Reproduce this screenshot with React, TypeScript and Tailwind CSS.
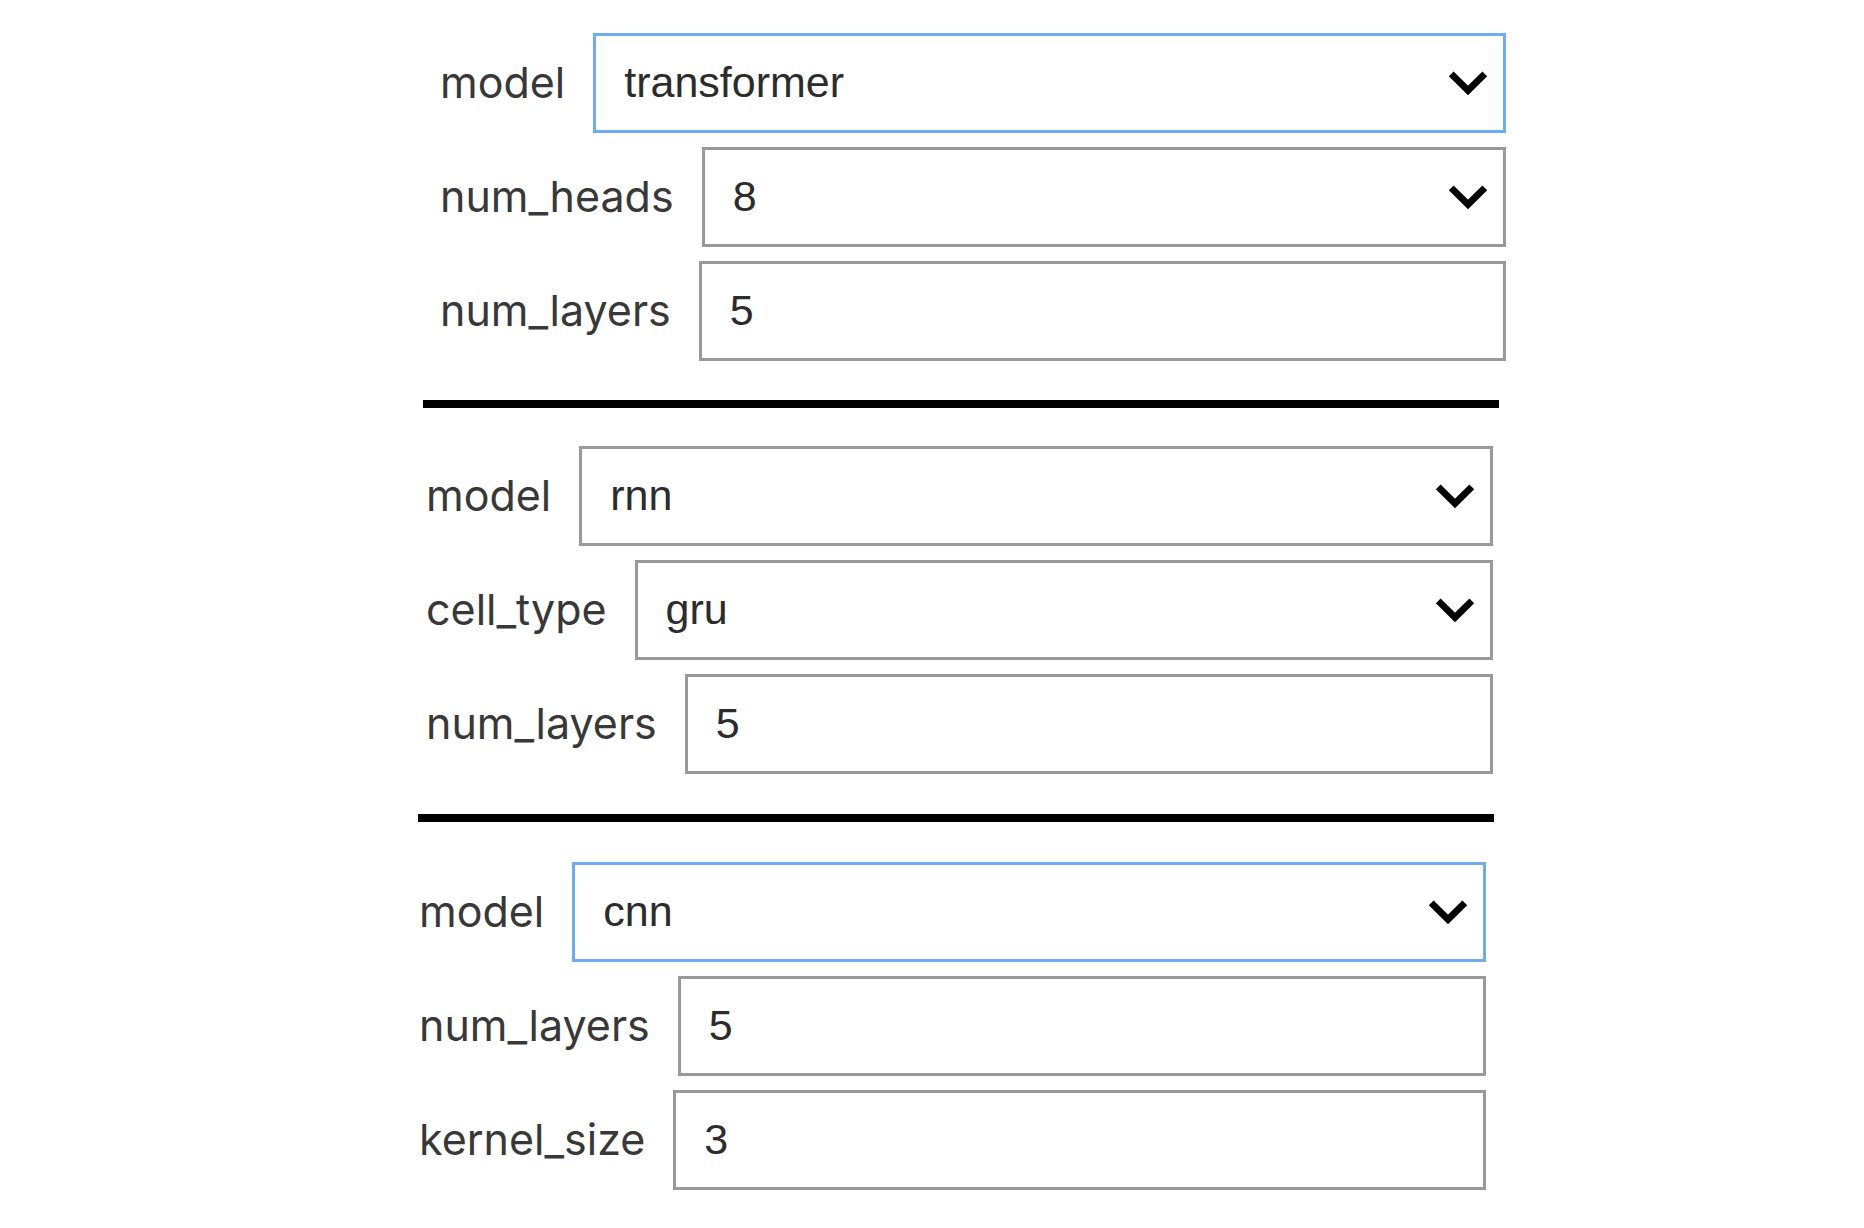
import { useId } from 'react';

type FieldProps = {
  label: string;
  value: string;
  options?: string[];
  active?: boolean;
};

const controlBase =
  'block h-[100px] w-full appearance-none rounded-none border-3 bg-white px-7 pb-0.5 text-[43px] text-[#2c2c2c] outline-none';

function Field({ label, value, options, active = false }: FieldProps) {
  const id = useId();
  const border = active ? 'border-[#6eadf2]' : 'border-[#999999]';

  return (
    <div className="flex items-center gap-7">
      <label htmlFor={id} className="shrink-0 pb-0.5 font-['Inter',sans-serif] text-[43px] leading-[50px] text-[#383838]">
        {label}
      </label>
      <div className="relative min-w-0 flex-1">
        {options ? (
          <>
            <select id={id} defaultValue={value} className={`${controlBase} ${border}`}>
              {options.map((option) => (
                <option key={option}>{option}</option>
              ))}
            </select>
            <svg
              aria-hidden="true"
              viewBox="0 0 40 26"
              className="pointer-events-none absolute top-[37px] right-[18px] h-[26px] w-10"
              fill="none"
              stroke="#000"
              strokeWidth="6.8"
            >
              <path d="M3.2 3.8 L20 20.4 L36.8 3.8" />
            </svg>
          </>
        ) : (
          <input id={id} type="text" defaultValue={value} className={`${controlBase} ${border}`} />
        )}
      </div>
    </div>
  );
}

const models = ['transformer', 'rnn', 'cnn'];

export default function App() {
  return (
    <main className="min-h-screen bg-white pt-[33px] pr-[358px] pb-9 pl-[418px] font-['Liberation_Sans',sans-serif]">
      <section className="ml-[22px] flex flex-col gap-3.5">
        <Field label="model" value="transformer" options={models} active />
        <Field label="num_heads" value="8" options={['2', '4', '8', '16']} />
        <Field label="num_layers" value="5" />
      </section>
      <hr className="mt-[39px] mr-[7px] mb-[38px] ml-[5px] border-t-8 border-black" />
      <section className="mr-[13px] ml-2 flex flex-col gap-3.5">
        <Field label="model" value="rnn" options={models} />
        <Field label="cell_type" value="gru" options={['gru', 'lstm']} />
        <Field label="num_layers" value="5" />
      </section>
      <hr className="mt-10 mr-3 mb-10 border-t-8 border-black" />
      <section className="mr-5 ml-px flex flex-col gap-3.5">
        <Field label="model" value="cnn" options={models} active />
        <Field label="num_layers" value="5" />
        <Field label="kernel_size" value="3" />
      </section>
    </main>
  );
}
